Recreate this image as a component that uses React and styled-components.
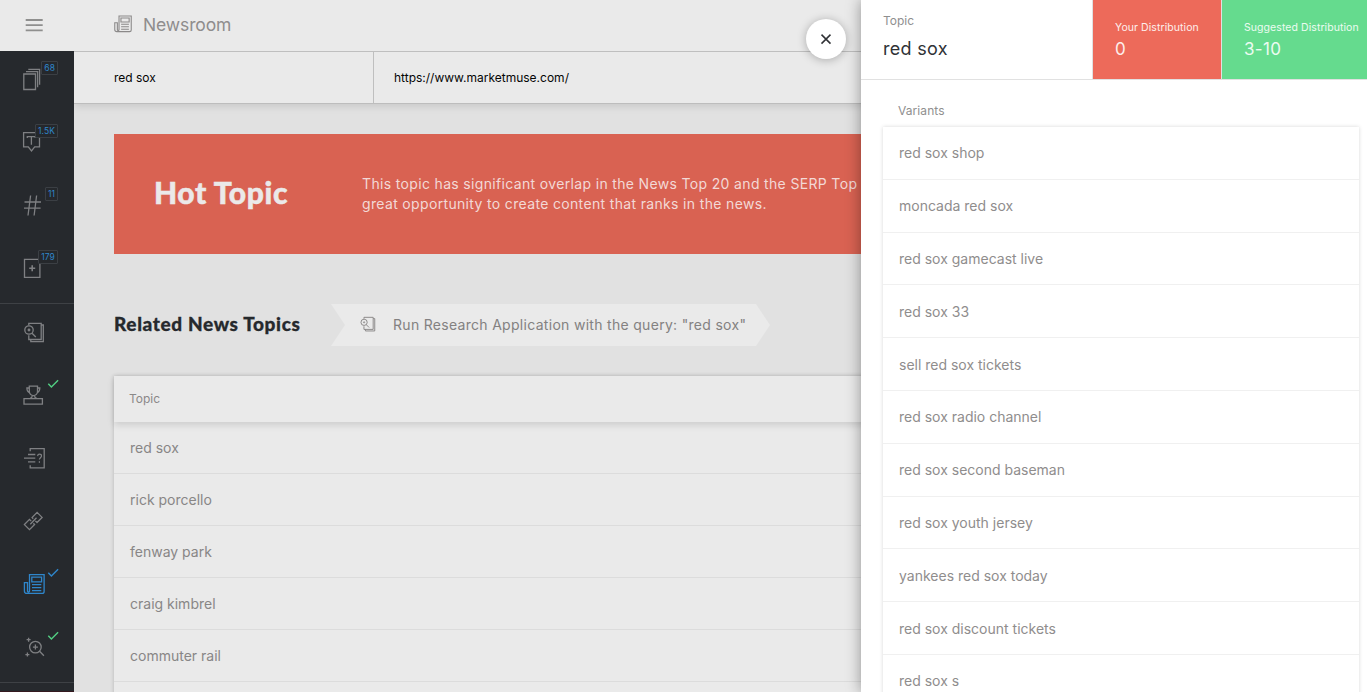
import React from "react";
import styled, { createGlobalStyle, css } from "styled-components";

const GlobalStyle = createGlobalStyle`
  * { box-sizing: border-box; }
  html, body { margin: 0; height: 100%; overflow: hidden; }
  body { font-family: Inter, "Liberation Sans", sans-serif; background: #e1e1e1; }
`;

const Page = styled.div`
  position: relative;
  display: flex;
  flex-direction: column;
  height: 692px;
  overflow: hidden;
`;

const TopBar = styled.header`
  display: flex;
  flex: none;
  height: 51px;
  background: #eaeaea;
`;

const MenuButton = styled.div`
  width: 74px;
  height: 51px;
  svg { display: block; }
`;

const PageTitle = styled.div`
  display: flex;
  align-items: center;
  gap: 11px;
  padding-left: 40px;
  height: 49px;
  font-size: 17.5px;
  letter-spacing: -0.12px;
  color: #8f8d8d;
  svg { display: block; margin-bottom: 1px; }
`;

const Body = styled.div`
  display: flex;
  flex: 1;
  min-height: 0;
`;

const Sidebar = styled.nav`
  display: flex;
  flex-direction: column;
  width: 74px;
  flex: none;
  background: #26292d;
  color: #7f8083;
`;

const NavGroup = styled.div`
  flex: none;
  border-bottom: 1px solid #3e4145;
`;

const NavFooter = styled.div`
  height: 1px;
  margin-top: auto;
  background: #35191f;
`;

const NavItem = styled.div`
  position: relative;
  height: 63px;
  color: ${(p) => (p.$active ? "#2f86cb" : "inherit")};
  > svg { display: block; }
`;

const Badge = styled.span`
  position: absolute;
  top: 10px;
  right: 16px;
  height: 14px;
  padding: 0 2px;
  border: 1px solid #3b3f44;
  border-radius: 1px;
  background: #25282c;
  color: #2f86cb;
  font-size: 8.5px;
  line-height: 13px;
  letter-spacing: 0.1px;
`;

const Main = styled.main`
  flex: 1;
  min-width: 0;
  overflow: hidden;
  background: #e1e1e1;
`;

const QueryBar = styled.div`
  display: flex;
  height: 53px;
  background: #eaeaea;
  border-top: 1px solid #bfbfbf;
  border-bottom: 1px solid #bdbdbd;
  box-shadow: 0 2px 8px rgba(0, 0, 0, 0.12);
`;

const QueryCell = styled.div`
  display: flex;
  align-items: center;
  width: ${(p) => p.$width};
  padding-left: ${(p) => p.$indent}px;
  border-right: ${(p) => (p.$divided ? "1px solid #bfbfbf" : "0")};
  color: #050505;
  font-size: 12px;
  letter-spacing: 0;
`;

const Content = styled.div`
  padding: 30px 0 0 40px;
`;

const Banner = styled.section`
  display: flex;
  align-items: center;
  width: 1213px;
  height: 120px;
  padding-left: 40px;
  background: #d96252;
  color: #ebe9e9;
`;

const BannerTitle = styled.h1`
  width: 208px;
  margin: 0 0 5px;
  font: 900 30px/40px Lato, sans-serif;
  letter-spacing: 0.6px;
  -webkit-text-stroke: 0.5px currentColor;
`;

const BannerText = styled.p`
  margin: 0;
  font-size: 14px;
  line-height: 20px;
  letter-spacing: 0.34px;
  white-space: nowrap;
  color: #f3d9d6;
`;

const SectionHead = styled.div`
  display: flex;
  align-items: center;
  height: 42px;
  margin-top: 50px;
`;

const SectionTitle = styled.h2`
  width: 217px;
  margin: 0 0 2px;
  font: 900 19px/26px Lato, sans-serif;
  letter-spacing: 0.63px;
  -webkit-text-stroke: 0.3px currentColor;
  color: #26292d;
  white-space: nowrap;
`;

const RunLink = styled.a`
  display: flex;
  align-items: center;
  gap: 17px;
  width: 439px;
  height: 42px;
  padding: 0 0 2px 29px;
  background: #eaeaea;
  clip-path: polygon(0 0, 425px 0, 100% 50%, 425px 100%, 0 100%, 14px 50%);
  color: #838181;
  font-size: 14px;
  letter-spacing: 0.3px;
  white-space: nowrap;
`;

const TopicTable = styled.section`
  width: 1213px;
  margin-top: 30px;
  background: #eaeaea;
  box-shadow: 0 0 4px rgba(0, 0, 0, 0.2);
`;

const TableHead = styled.div`
  height: 46px;
  padding-left: 15px;
  line-height: 46px;
  font-size: 12px;
  letter-spacing: 0;
  color: #8a8888;
  box-shadow: 0 3px 7px rgba(0, 0, 0, 0.13);
`;

const rowText = css`
  font-size: 14px;
  letter-spacing: 0;
  color: #888686;
`;

const TopicRow = styled.div`
  ${rowText}
  height: 52px;
  padding-left: 16px;
  line-height: 52px;
  border-bottom: 1px solid #dcdcdc;
`;

const Drawer = styled.aside`
  position: absolute;
  top: 0;
  right: 0;
  width: 506px;
  height: 692px;
  background: #fff;
  box-shadow: 0 0 14px rgba(0, 0, 0, 0.38);
`;

const CloseButton = styled.button`
  position: absolute;
  top: 19px;
  left: 806px;
  width: 40px;
  height: 40px;
  padding: 0;
  border: 0;
  border-radius: 50%;
  background: #fff;
  box-shadow: 0 1px 10px rgba(0, 0, 0, 0.28);
  svg { display: block; }
`;

const DrawerHead = styled.div`
  display: flex;
  height: 80px;
  border-bottom: 1px solid #e1e1e1;
`;

const Stat = styled.div`
  width: ${(p) => p.$width}px;
  padding: ${(p) => (p.$main ? 13 : 20)}px 0 0 22px;
  border-right: 1px solid #e1e1e1;
  background: ${(p) => p.$bg};
  color: ${(p) => p.$color};
  white-space: nowrap;
  &:last-child { border-right: 0; }
`;

const StatLabel = styled.div`
  font-size: ${(p) => (p.$main ? 12 : 10.5)}px;
  line-height: 15px;
  letter-spacing: ${(p) => (p.$main ? 0 : 0.07)}px;
  color: ${(p) => (p.$main ? "#8f8f8f" : "inherit")};
`;

const StatValue = styled.div`
  margin-top: ${(p) => (p.$main ? 10 : 3)}px;
  font-size: ${(p) => (p.$main ? 18 : 17)}px;
  line-height: 22px;
  letter-spacing: 0.3px;
`;

const Variants = styled.div`
  padding: 23px 8px 0 22px;
`;

const VariantsLabel = styled.div`
  height: 24px;
  padding-left: 15px;
  font-size: 12px;
  line-height: 16px;
  letter-spacing: 0.08px;
  color: #8f8f8f;
`;

const VariantList = styled.div`
  background: #fff;
  box-shadow: 0 0 4px rgba(0, 0, 0, 0.16);
`;

const VariantRow = styled.div`
  ${rowText}
  color: #8f8d8d;
  height: 52.8px;
  padding: 0.4px 0 0 16px;
  line-height: 52px;
  border-bottom: 1px solid #f0f0f0;
`;

function Check({ color = "#52cf83" }) {
  return <path d="M48.3 16.8l3.1 3.3 6.7-6.8" stroke={color} strokeWidth="1.4" />;
}

function NavSvg({ children }) {
  return (
    <svg width="74" height="63" viewBox="0 0 74 63" fill="none" stroke="currentColor" strokeWidth="1.3">
      {children}
    </svg>
  );
}

const Pages = () => (
  <NavSvg>
    <path d="M23.8 23h11.7v15.5H23.8zM26 20.7h11.6v15.6M28.3 18.4h11.3v15.4" />
  </NavSvg>
);
const TopicTag = () => (
  <NavSvg>
    <path d="M23.6 18.6h15.9v14.3h-4.8l-3.2 4-3.2-4h-4.7zM27.3 24v-1.3h8V24M31.4 22.7v8" />
  </NavSvg>
);
const Hash = () => (
  <NavSvg>
    <path d="M30.6 18.5l-2.6 20M36.6 18.5l-2.5 20M24.5 25H41M24 31.1h16.6" />
  </NavSvg>
);
const AddBox = () => (
  <NavSvg>
    <path d="M24.5 19.3h15.4v18H24.5z" />
    <path d="M32.2 25.3v6M29.2 28.3h6" strokeWidth="1.6" />
  </NavSvg>
);

const ResearchShapes = () => (
  <>
    <path d="M28.8 21.2v-1.9h12.4v16.2H28.8v-4.2M30.8 35.8v1.8h12.5V21h-2" />
    <circle cx="29" cy="26" r="4.2" />
    <circle cx="29" cy="26" r="0.8" />
    <path d="M32 29.2l3.8 3.8" />
  </>
);
const Research = () => <NavSvg><ResearchShapes /></NavSvg>;

const Trophy = () => (
  <NavSvg>
    <path d="M24 31.6h18.4v5.6H24zM29.3 19.2h8.2v5.3c0 2.2-1.8 4.1-4.1 4.1s-4.1-1.9-4.1-4.1zM29.2 21h-2.3c0 2.7.8 4.2 3 4.6M37.6 21h2.2c0 2.7-.8 4.2-3 4.6M32.3 28.4c0 1.7-.9 2.4-2.1 3M34.5 28.4c0 1.7.9 2.4 2.1 3" />
    <Check />
  </NavSvg>
);
const Questions = () => (
  <NavSvg>
    <path d="M30.2 21.3v-2.7h14v19.2h-14v-2.5M28 24.5h7.3M24 28.2h11.3M28 31.9h7.3" />
    <path d="M37.6 26.1c.1-1.3.8-1.9 1.9-1.9s2 .7 2 1.8c0 1.7-2.1 1.7-2.1 3.6M39.4 31.2v1.5" strokeWidth="1.2" />
  </NavSvg>
);
const Link = () => (
  <NavSvg>
    <path d="M33.2 25.8l-1.1-1.2 5-5.2 5 5-5.1 5.1-1.7-1.6M33.4 30.3l1.2 1.2-5.1 5.2-5.1-5.1 5.1-5.2 1.7 1.7M30.3 31.2l6.2-6.4" />
  </NavSvg>
);

const NewspaperShapes = () => (
  <>
    <path d="M29.5 18.7h14.6v16.7c0 1.2-.8 2-2 2H27c-1.6 0-2.6-1-2.6-2.5v-8.2h3.1v8.5c0 1.1 2 1.1 2 0zM31.8 21.1h9.8v4.7h-9.8zM32 28.6h9.3M32 31.6h9.3M32 34.6h9.3" />
  </>
);
const News = () => (
  <NavSvg>
    <NewspaperShapes />
    <Check color="#2f86cb" />
  </NavSvg>
);
const Optimize = () => (
  <NavSvg>
    <circle cx="35.4" cy="28.1" r="5.8" />
    <path d="M39.6 32.3l4.3 4.5M35.4 25.6v5M32.9 28.1h5M28.6 18.7v4M26.6 20.7h4M27.4 33.6v4M25.4 35.6h4" />
    <Check />
  </NavSvg>
);

const primaryNav = [
  { Icon: Pages, badge: "68" },
  { Icon: TopicTag, badge: "1.5K" },
  { Icon: Hash, badge: "11" },
  { Icon: AddBox, badge: "179" },
];
const appNav = [Research, Trophy, Questions, Link, News, Optimize];

const topics = ["red sox", "rick porcello", "fenway park", "craig kimbrel", "commuter rail"];
const variants = [
  "red sox shop",
  "moncada red sox",
  "red sox gamecast live",
  "red sox 33",
  "sell red sox tickets",
  "red sox radio channel",
  "red sox second baseman",
  "red sox youth jersey",
  "yankees red sox today",
  "red sox discount tickets",
  "red sox s",
];

export default function App() {
  return (
    <Page>
      <GlobalStyle />
      <TopBar>
        <MenuButton>
          <svg width="74" height="51" fill="none" stroke="#8f8f8e" strokeWidth="1.8">
            <path d="M25.7 20h17M25.7 25.2h17M25.7 30.3h17" />
          </svg>
        </MenuButton>
        <PageTitle>
          <svg width="18" height="18" viewBox="23.5 17.5 21.5 21.5" fill="none" stroke="#8b8989" strokeWidth="1.3">
            <NewspaperShapes />
          </svg>
          Newsroom
        </PageTitle>
      </TopBar>
      <Body>
        <Sidebar>
          <NavGroup>
            {primaryNav.map(({ Icon, badge }) => (
              <NavItem key={badge}>
                <Icon />
                <Badge>{badge}</Badge>
              </NavItem>
            ))}
          </NavGroup>
          <NavGroup>
            {appNav.map((Icon, i) => (
              <NavItem key={i} $active={Icon === News}>
                <Icon />
              </NavItem>
            ))}
          </NavGroup>
          <NavFooter />
        </Sidebar>
        <Main>
          <QueryBar>
            <QueryCell $width="300px" $indent={40} $divided>red sox</QueryCell>
            <QueryCell $width="auto" $indent={20}>https://www.marketmuse.com/</QueryCell>
          </QueryBar>
          <Content>
            <Banner>
              <BannerTitle>Hot Topic</BannerTitle>
              <BannerText>
                This topic has significant overlap in the News Top 20 and the SERP Top
                <br />
                great opportunity to create content that ranks in the news.
              </BannerText>
            </Banner>
            <SectionHead>
              <SectionTitle>Related News Topics</SectionTitle>
              <RunLink>
                <svg width="16" height="16" viewBox="23.5 17.5 21.5 21.5" fill="none" stroke="#838181" strokeWidth="1.2">
                  <ResearchShapes />
                </svg>
                Run Research Application with the query: "red sox"
              </RunLink>
            </SectionHead>
            <TopicTable>
              <TableHead>Topic</TableHead>
              {topics.map((t) => (
                <TopicRow key={t}>{t}</TopicRow>
              ))}
              <TopicRow />
            </TopicTable>
          </Content>
        </Main>
      </Body>
      <Drawer>
        <DrawerHead>
          <Stat $width={232} $main $bg="#fff" $color="#303236">
            <StatLabel $main>Topic</StatLabel>
            <StatValue $main>red sox</StatValue>
          </Stat>
          <Stat $width={129} $bg="#ed6a5a" $color="#fdeeec">
            <StatLabel>Your Distribution</StatLabel>
            <StatValue>0</StatValue>
          </Stat>
          <Stat $width={145} $bg="#65db8e" $color="#ecfbf1">
            <StatLabel>Suggested Distribution</StatLabel>
            <StatValue>3-10</StatValue>
          </Stat>
        </DrawerHead>
        <Variants>
          <VariantsLabel>Variants</VariantsLabel>
          <VariantList>
            {variants.map((v) => (
              <VariantRow key={v}>{v}</VariantRow>
            ))}
          </VariantList>
        </Variants>
      </Drawer>
      <CloseButton aria-label="Close">
        <svg width="40" height="40" fill="none" stroke="#303236" strokeWidth="1.5">
          <path d="M15.5 15.6l9 9M24.5 15.6l-9 9" />
        </svg>
      </CloseButton>
    </Page>
  );
}
